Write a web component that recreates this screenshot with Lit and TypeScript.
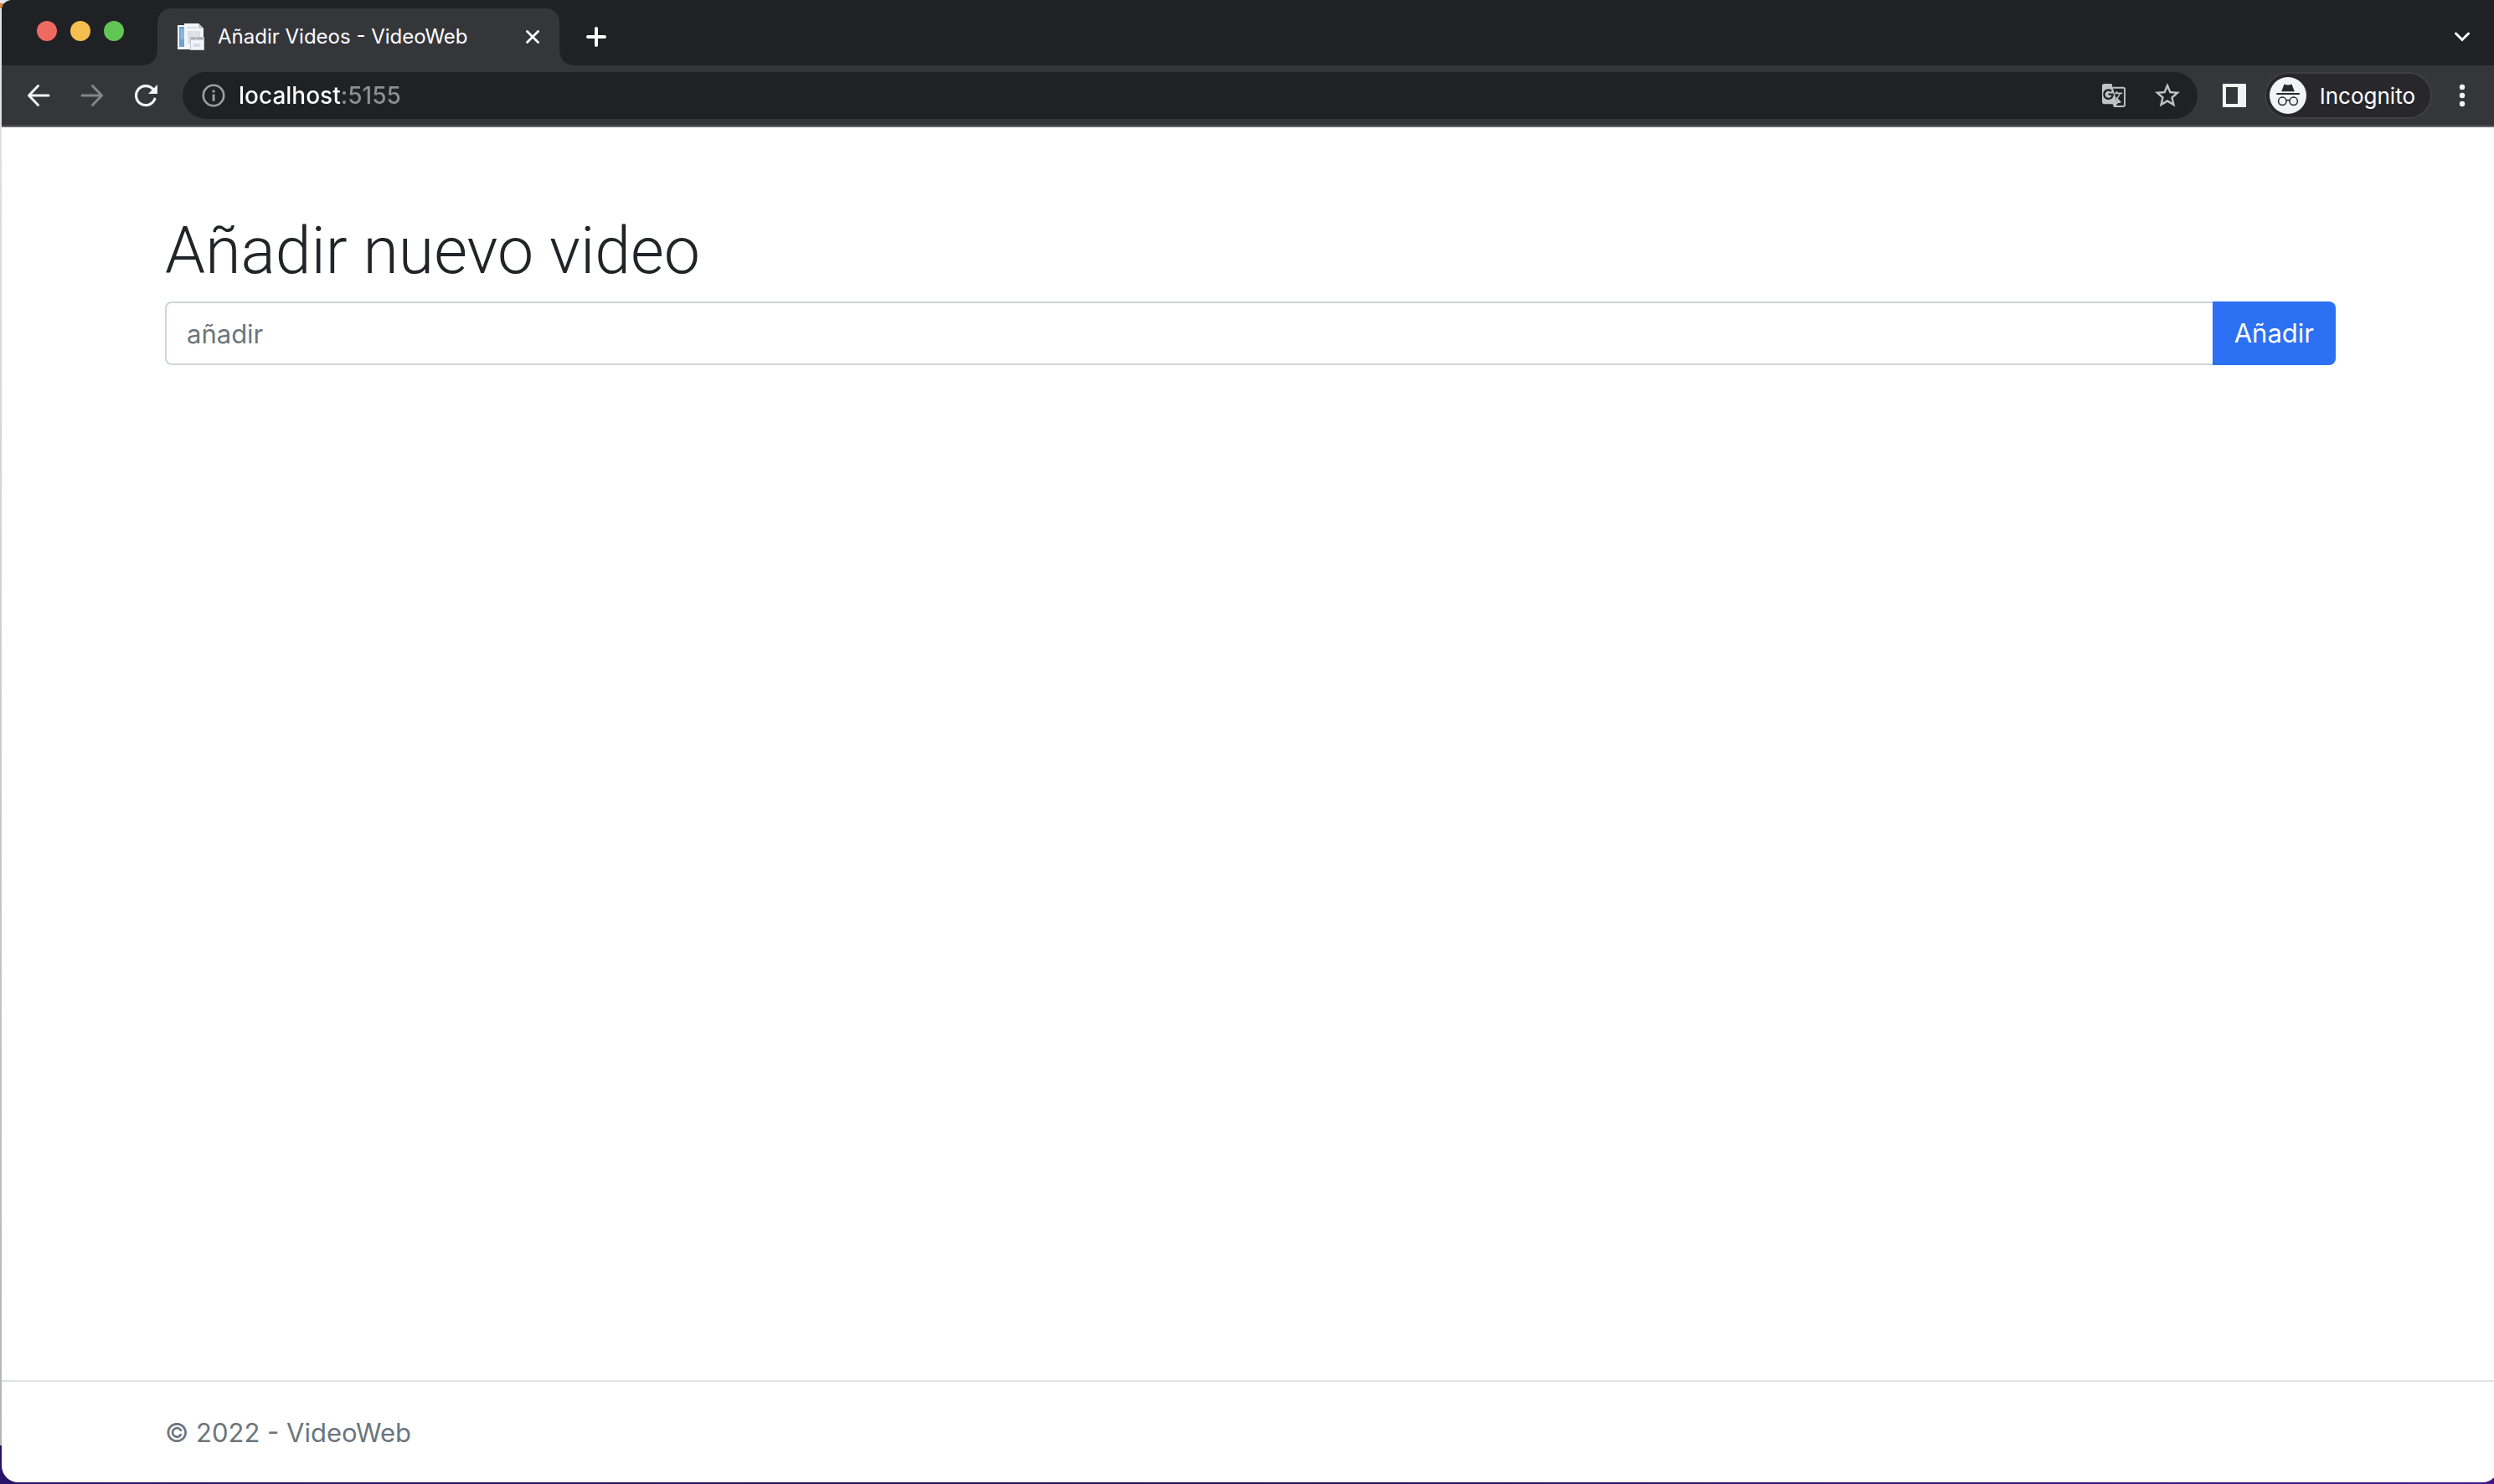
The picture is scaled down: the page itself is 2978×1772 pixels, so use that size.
import { LitElement, html, css, svg } from "lit";
import { customElement, property, state } from "lit/decorators.js";

const icons = {
  back: svg`<svg width="28" height="28" viewBox="0 0 28 28" fill="none" stroke="currentColor" stroke-width="3" stroke-linecap="round" stroke-linejoin="round"><path d="M13.5 2.500L2.500 14l11 11.500M2.500 14H26"/></svg>`,
  forward: svg`<svg width="28" height="28" viewBox="0 0 28 28" fill="none" stroke="currentColor" stroke-width="3" stroke-linecap="round" stroke-linejoin="round"><path d="M14.500 2.500L25.500 14l-11 11.500M25.500 14H2"/></svg>`,
  reload: svg`<svg width="28" height="28" viewBox="0 0 28 28"><path d="M24.800 18.200A11.500 11.500 0 1 1 22.600 6.400" fill="none" stroke="currentColor" stroke-width="3.200" stroke-linecap="round"/><path d="M28 1v11H17z" fill="currentColor"/></svg>`,
  info: svg`<svg width="28" height="28" viewBox="0 0 28 28"><circle cx="14" cy="14" r="12.200" fill="none" stroke="currentColor" stroke-width="2.600"/><path d="M12.600 7.500h2.900v3h-2.900zM12.600 12.500h2.900v8.300h-2.900z" fill="currentColor"/></svg>`,
  close: svg`<svg width="16" height="16" viewBox="0 0 16 16" fill="none" stroke="currentColor" stroke-width="2.800" stroke-linecap="round"><path d="M1.500 1.500l13 13M14.500 1.500l-13 13"/></svg>`,
  plus: svg`<svg width="24" height="24" viewBox="0 0 24 24" fill="none" stroke="currentColor" stroke-width="4" stroke-linecap="round"><path d="M12 2v20M2 12h20"/></svg>`,
  chevron: svg`<svg width="20" height="12" viewBox="0 0 20 12" fill="none" stroke="currentColor" stroke-width="3" stroke-linecap="round" stroke-linejoin="miter"><path d="M2.500 2L10 9.500 17.500 2"/></svg>`,
  translate: svg`<svg width="28" height="28" viewBox="1 1 22 22" fill="currentColor"><path d="M10 1H3c-1.100 0-2 .9-2 2v15c0 1.100.9 2 2 2h12.500zM7 16c-2.760 0-5-2.240-5-5s2.240-5 5-5c1.350 0 2.480.5 3.350 1.300L9.030 8.570c-.38-.36-1.040-.78-2.030-.78-1.740 0-3.150 1.440-3.150 3.210S5.260 14.210 7 14.210c2.010 0 2.840-1.440 2.920-2.410H7v-1.710h4.680c.07.31.12.61.12 1.020C11.800 13.970 9.890 16 7 16z" fill-rule="evenodd"/><path d="M21 4H11l.46 1.500h9.040c.55 0 1 .45 1 1v14c0 .55-.45 1-1 1H14l2-2.500-5 1 1 3h9c1.100 0 2-.9 2-2V6c0-1.100-.9-2-2-2z"/><path d="M20 10.590v-1.300h-4.530V8h-1.290v1.290h-1.440l.43 1.290h3.700c-.43 1.250-1.110 2.430-2.050 3.470-.31-.35-.6-.72-.86-1.100l1 6.050L18.060 19l.92-.92-3.300-3.250.02-.02c1.130-1.250 1.930-2.690 2.400-4.220z"/></svg>`,
  star: svg`<svg width="36" height="36" viewBox="0 0 24 24" fill="currentColor"><path d="M22 9.240l-7.190-.62L12 2 9.190 8.630 2 9.240l5.460 4.730L5.820 21 12 17.270 18.180 21l-1.630-7.030L22 9.240zM12 15.400l-3.760 2.270 1-4.280-3.320-2.880 4.380-.38L12 6.100l1.710 4.040 4.380.38-3.320 2.880 1 4.280L12 15.400z"/></svg>`,
  panel: svg`<svg width="28" height="28" viewBox="0 0 28 28"><path d="M0 0h28v28H0zM4 4v20h14V4z" fill="currentColor" fill-rule="evenodd"/></svg>`,
  dots: svg`<svg width="8" height="28" viewBox="0 0 8 28" fill="currentColor"><circle cx="4" cy="4" r="3.200"/><circle cx="4" cy="14" r="3.200"/><circle cx="4" cy="24" r="3.200"/></svg>`,
  incognito: svg`<svg width="44" height="44" viewBox="0 0 44 44"><circle cx="22" cy="22" r="22" fill="#f1f3f4"/><path d="M17.300 8.900q1-.5 2 0 2.700 1 5.400 0 1-.5 2 0L29.800 17.300H14.200z" fill="#28272c"/><path d="M8.300 19h27.600v2H8.300z" fill="#28272c"/><g fill="none" stroke="#28272c" stroke-width="1.500"><circle cx="15.300" cy="28.800" r="4.700"/><circle cx="28.700" cy="28.800" r="4.700"/><path d="M20 28q2-1.200 4 0"/></g></svg>`,
  favicon: svg`<svg width="32" height="32" viewBox="0 0 32 32"><path d="M0 2h9v29H0z" fill="#f3f5f8"/><path d="M2 4h6v24H2z" fill="#6aa5d8"/><path d="M3.500 7h4.500v12H3.500z" fill="#86b7e2"/><path d="M8 0h17l6 6v25H8z" fill="#f4f5f7"/><path d="M25 0v6h6z" fill="#c4c8cd"/><path d="M11 4h12v2H11zM12 9h7v15h-7zM20 9h7v7h-7z" fill="#dcdfe5"/><path d="M15 16h17v16H15z" fill="#c3c6cd"/><path d="M16 20h15v11H16z" fill="#f3f3fa"/><path d="M16 17h5v1h-5zM23 17h7v1h-7z" fill="#92969f"/><path d="M19 24h8v4h-8z" fill="#d9dae4"/></svg>`,
};

/** Tab strip and toolbar of the browser window. */
@customElement("browser-chrome")
export class BrowserChrome extends LitElement {
  @property() tabTitle = "";
  @property() address = "";

  static styles = css`
    :host {
      display: block;
      font-family: Inter, "Liberation Sans", sans-serif;
      color: #ffffff;
      border-bottom: 2px solid #68646b;
    }
    button {
      display: flex;
      align-items: center;
      justify-content: center;
      padding: 0;
      border: 0;
      background: none;
      color: inherit;
      font: inherit;
    }
    svg {
      display: block;
      flex: none;
    }
    .strip {
      display: flex;
      align-items: flex-end;
      height: 68px;
      padding: 10px 12px 0 42px;
      background: #202124;
    }
    .lights {
      display: flex;
      gap: 16px;
      align-self: flex-start;
      padding-top: 15px;
      margin-right: 24px;
    }
    .light {
      width: 24px;
      height: 24px;
      border-radius: 50%;
    }
    .red { background: #ee6a5f; }
    .amber { background: #f5bf4f; }
    .green { background: #62c655; }
    .curve {
      width: 16px;
      height: 16px;
    }
    .before { background: radial-gradient(circle at 0 0, #202124 15px, #35363a 16px); }
    .after { background: radial-gradient(circle at 100% 0, #202124 15px, #35363a 16px); }
    .tab {
      display: flex;
      align-items: center;
      box-sizing: border-box;
      width: 480px;
      height: 68px;
      padding: 0 16px 0 24px;
      border-radius: 16px 16px 0 0;
      background: #35363a;
    }
    .title {
      flex: 1;
      margin-left: 16px;
      font-size: 24px;
      line-height: 32px;
      white-space: nowrap;
    }
    .close {
      width: 32px;
      height: 32px;
    }
    .new {
      width: 56px;
      height: 68px;
    }
    .search {
      width: 64px;
      height: 68px;
      margin-left: auto;
    }
    .toolbar {
      display: flex;
      align-items: center;
      gap: 12px;
      height: 72px;
      padding: 0 12px;
      background: #35363a;
    }
    .group {
      display: flex;
      align-items: center;
      color: #f1f3f4;
    }
    .icon {
      width: 64px;
      height: 56px;
    }
    .icon:disabled { color: #84858a; }
    .side { gap: 4px; }
    .omnibox {
      display: flex;
      align-items: center;
      flex: 1;
      box-sizing: border-box;
      height: 56px;
      padding: 0 4px 0 23px;
      border-radius: 28px;
      background: #202124;
      color: #c0c1c3;
    }
    .site { color: #9aa0a6; }
    .address {
      flex: 1;
      min-width: 0;
      margin: 0 0 0 16px;
      padding: 0;
      border: 0;
      outline: 0;
      font: 500 28px/36px Inter, "Liberation Sans", sans-serif;
      color: #ffffff;
      background: linear-gradient(90deg, #ffffff 123px, #8e8f92 123px);
      -webkit-background-clip: text;
      background-clip: text;
      -webkit-text-fill-color: transparent;
    }
    .profile {
      gap: 16px;
      box-sizing: border-box;
      height: 56px;
      padding: 0 18px 0 4px;
      border: 2px solid #403f45;
      border-radius: 28px;
      background: #28272c;
      color: #ffffff;
      font-size: 26px;
    }
  `;

  render() {
    return html`
      <div class="strip">
        <div class="lights">
          <span class="light red"></span>
          <span class="light amber"></span>
          <span class="light green"></span>
        </div>
        <span class="curve before"></span>
        <div class="tab">
          ${icons.favicon}
          <span class="title">${this.tabTitle}</span>
          <button class="close" aria-label="Close tab">${icons.close}</button>
        </div>
        <span class="curve after"></span>
        <button class="new" aria-label="New tab">${icons.plus}</button>
        <button class="search" aria-label="Search tabs">${icons.chevron}</button>
      </div>
      <div class="toolbar">
        <div class="group">
          <button class="icon" aria-label="Back">${icons.back}</button>
          <button class="icon" aria-label="Forward" disabled>${icons.forward}</button>
          <button class="icon" aria-label="Reload">${icons.reload}</button>
        </div>
        <div class="omnibox">
          <button class="site" aria-label="Site information">${icons.info}</button>
          <input class="address" type="text" aria-label="Address" .value=${this.address} />
          <button class="icon" aria-label="Translate">${icons.translate}</button>
          <button class="icon" aria-label="Bookmark">${icons.star}</button>
        </div>
        <div class="group side">
          <button class="icon" aria-label="Side panel">${icons.panel}</button>
          <button class="profile">${icons.incognito}<span>Incognito</span></button>
          <button class="icon" aria-label="Menu">${icons.dots}</button>
        </div>
      </div>
    `;
  }
}

/** The page for adding videos. */
@customElement("video-page")
export class VideoPage extends LitElement {
  @state() private draft = "";

  static styles = css`
    :host {
      display: flex;
      flex-direction: column;
      flex: 1;
      background: #ffffff;
      color: #212529;
      font-family: Inter, "Liberation Sans", sans-serif;
      font-size: 31px;
      line-height: 48px;
    }
    .container {
      box-sizing: border-box;
      width: 100%;
      max-width: 2640px;
      margin: 0 auto;
      padding: 0 24px;
    }
    main { flex: 1; }
    h1 {
      margin: 0;
      padding: 100px 0 12px;
      font-family: Roboto, Inter, sans-serif;
      font-size: 77px;
      font-weight: 300;
      line-height: 96px;
    }
    form { display: flex; }
    input {
      flex: 1;
      min-width: 0;
      box-sizing: border-box;
      height: 76px;
      margin: 0;
      padding: 0 24px;
      border: 2px solid #ced4da;
      border-right: 0;
      border-radius: 8px 0 0 8px;
      outline: 0;
      background: #ffffff;
      color: inherit;
      font: inherit;
    }
    input::placeholder {
      color: #6c757d;
      opacity: 1;
    }
    button {
      height: 76px;
      padding: 0 26px;
      border: 0;
      border-radius: 0 8px 8px 0;
      background: #2c70f3;
      color: #ffffff;
      font: inherit;
    }
    footer {
      padding: 2px 0 0;
      border-top: 2px solid #dee2e6;
      color: #6c757d;
      line-height: 118px;
    }
  `;

  private onInput(e: Event) {
    this.draft = (e.target as HTMLInputElement).value;
  }

  private onSubmit(e: Event) {
    e.preventDefault();
    this.draft = "";
  }

  render() {
    return html`
      <main>
        <div class="container">
          <h1>Añadir nuevo video</h1>
          <form @submit=${this.onSubmit}>
            <input
              type="text"
              placeholder="añadir"
              aria-label="añadir"
              .value=${this.draft}
              @input=${this.onInput}
            />
            <button type="submit">Añadir</button>
          </form>
        </div>
      </main>
      <footer><div class="container">© 2022 - VideoWeb</div></footer>
    `;
  }
}

@customElement("app-root")
export class AppRoot extends LitElement {
  static styles = css`
    :host {
      display: flex;
      box-sizing: border-box;
      min-height: 100vh;
      padding: 0 0 2px 2px;
      overflow: hidden;
      background:
        linear-gradient(#d98a45, #d98a45) 0 4px / 12px 6px no-repeat,
        linear-gradient(#e4e4e4, #b4b4b4) 0 0 / 2px calc(100% - 46px) no-repeat,
        linear-gradient(#e4e4e4, #e4e4e4) 0 0 / 12px 12px no-repeat,
        linear-gradient(90deg, #2a1468, #241058 50%, #40168a);
    }
    .window {
      display: flex;
      flex-direction: column;
      flex: 1;
      margin-right: -6px;
      overflow: hidden;
      border-radius: 12px 0 20px 20px;
    }
  `;

  render() {
    return html`
      <div class="window">
        <browser-chrome tabTitle="Añadir Videos - VideoWeb" address="localhost:5155"></browser-chrome>
        <video-page></video-page>
      </div>
    `;
  }
}
